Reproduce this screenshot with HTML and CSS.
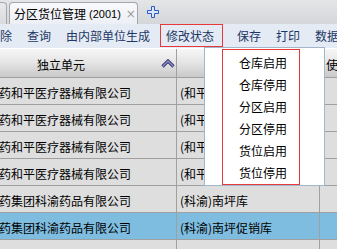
FILE: index.html
```html
<!DOCTYPE html>
<html lang="zh-CN">
<head>
  <meta charset="UTF-8">
  <title>分区货位管理</title>
  <link rel="stylesheet" href="styles.css">
</head>
<body>
  <!-- Tab bar -->
  <div class="tabbar">
    <div class="tab tab-prev"></div>
    <div class="tab tab-active">
      <span class="tab-title">分区货位管理</span>
      <span class="tab-code">(2001)</span>
      <span class="tab-close">&times;</span>
    </div>
    <svg class="tab-add" width="12" height="12" viewBox="0 0 12 12">
      <path d="M4.5 0.5h3v4h4v3h-4v4h-3v-4h-4v-3h4z" fill="#dbe7fb" stroke="#2a5cc0" stroke-width="1"/>
    </svg>
  </div>

  <!-- Toolbar -->
  <div class="toolbar">
    <span class="tool">删除</span>
    <span class="tool">查询</span>
    <span class="tool">由内部单位生成</span>
    <span class="tool tool-open">修改状态</span>
    <span class="tool">保存</span>
    <span class="tool">打印</span>
    <span class="tool">数据</span>
  </div>

  <!-- Grid -->
  <div class="grid">
    <div class="row head">
      <div class="cell c1">独立单元
        <svg class="sort" width="14" height="9" viewBox="0 0 14 9">
          <polyline points="1.5,7.5 7,2 12.5,7.5" fill="none" stroke="#3a3a6a" stroke-width="3.2"/>
          <polyline points="1.5,7.5 7,2 12.5,7.5" fill="none" stroke="#8a8ad0" stroke-width="1.4"/>
        </svg>
      </div>
      <div class="cell c2"></div>
      <div class="cell c3">使用</div>
    </div>
    <div class="row">
      <div class="cell c1">药和平医疗器械有限公司</div>
      <div class="cell c2">(和平)中心库</div>
      <div class="cell c3"></div>
    </div>
    <div class="row">
      <div class="cell c1">药和平医疗器械有限公司</div>
      <div class="cell c2">(和平)器械库</div>
      <div class="cell c3"></div>
    </div>
    <div class="row">
      <div class="cell c1">药和平医疗器械有限公司</div>
      <div class="cell c2">(和平)退货库</div>
      <div class="cell c3"></div>
    </div>
    <div class="row">
      <div class="cell c1">药和平医疗器械有限公司</div>
      <div class="cell c2">(和平)促销库</div>
      <div class="cell c3"></div>
    </div>
    <div class="row">
      <div class="cell c1">药集团科渝药品有限公司</div>
      <div class="cell c2">(科渝)南坪库</div>
      <div class="cell c3"></div>
    </div>
    <div class="row selected">
      <div class="cell c1">药集团科渝药品有限公司</div>
      <div class="cell c2">(科渝)南坪促销库</div>
      <div class="cell c3"></div>
    </div>
    <div class="row">
      <div class="cell c1">药集团科渝药品有限公司</div>
      <div class="cell c2">(科渝)南岸库</div>
      <div class="cell c3"></div>
    </div>
  </div>

  <!-- Dropdown menu for 修改状态 -->
  <div class="menu">
    <ul class="menu-list">
      <li>仓库启用</li>
      <li>仓库停用</li>
      <li>分区启用</li>
      <li>分区停用</li>
      <li>货位启用</li>
      <li>货位停用</li>
    </ul>
  </div>
</body>
</html>
```

FILE: styles.css
```css
* {
  margin: 0;
  padding: 0;
  box-sizing: border-box;
}
body {
  width: 337px;
  height: 249px;
  overflow: hidden;
  position: relative;
  font-family: "Noto Sans CJK SC", sans-serif;
  font-size: 12px;
  color: #000;
  background: #dedede;
}
/* Tab bar */
.tabbar {
  height: 24px;
  display: flex;
  align-items: flex-end;
  background: linear-gradient(#e4e5e7, #d4d6da);
}
.tab {
  height: 22px;
  border: 1px solid #a4a6aa;
  border-bottom: none;
  border-radius: 4px 4px 0 0;
}
.tab-prev {
  width: 7px;
  border-left: none;
  border-radius: 0 4px 0 0;
  background: linear-gradient(#e8e9eb, #d9dade);
}
.tab-active {
  width: 129px;
  margin-left: 2px;
  display: flex;
  align-items: center;
  padding-left: 4px;
  background: linear-gradient(#f8f9fb, #eceff5);
}
.tab-title {
  line-height: 14px;
}
.tab-code {
  font-family: "Liberation Sans", sans-serif;
  font-size: 11px;
  margin-left: 3px;
}
.tab-close {
  font-family: "DejaVu Sans", sans-serif;
  color: #9a9a9a;
  font-size: 12px;
  margin-left: 5px;
}
.tab-add {
  margin: 0 0 6px 9px;
}
/* Toolbar */
.toolbar {
  height: 24px;
  display: flex;
  align-items: center;
  gap: 15px;
  margin-left: -12px;
  background: #e5ebf4;
  color: #1d3766;
  font-size: 12px;
}
.tool {
  white-space: nowrap;
  line-height: 14px;
}
.tool-open {
  height: 23px;
  line-height: 21px;
  padding: 0 8px 0 5px;
  margin-left: -5px;
  margin-right: -1px;
  border: 1px solid #e8393a;
  align-self: flex-start;
}
/* Grid */
.grid {
  background: #dedede;
}
.row {
  height: 27px;
  display: grid;
  grid-template-columns: 177px 143px 1fr;
  border-bottom: 1px solid #a0a0a0;
}
.cell {
  display: flex;
  align-items: center;
  padding-top: 2px;
  white-space: nowrap;
  overflow: hidden;
}
.c1 {
  border-right: 1px solid #a0a0a0;
  text-indent: -1px;
}
.c2 {
  border-right: 1px solid #a0a0a0;
  padding-left: 3px;
}
.c3 {
  padding-left: 6px;
}
.head {
  height: 30px;
  background: linear-gradient(#f6f6f6, #e6e6e6 45%, #c9c9c9);
  border-top: 1px solid #fff;
}
.head .c1 {
  padding-left: 38px;
  position: relative;
}
.sort {
  position: absolute;
  left: 161px;
  top: 10px;
}
.selected {
  background: #7fbde0;
}
/* Dropdown menu */
.menu {
  position: absolute;
  left: 204px;
  top: 47px;
  width: 121px;
  height: 139px;
  background: #fff;
  border: 1px solid #a3b6cb;
  padding: 1px 0 0 17px;
}
.menu-list {
  list-style: none;
  width: 78px;
  height: 136px;
  border: 1px solid #e8393a;
  padding: 2px 0 0 16px;
}
.menu-list li {
  height: 22px;
  line-height: 22px;
  font-size: 12px;
}
```
